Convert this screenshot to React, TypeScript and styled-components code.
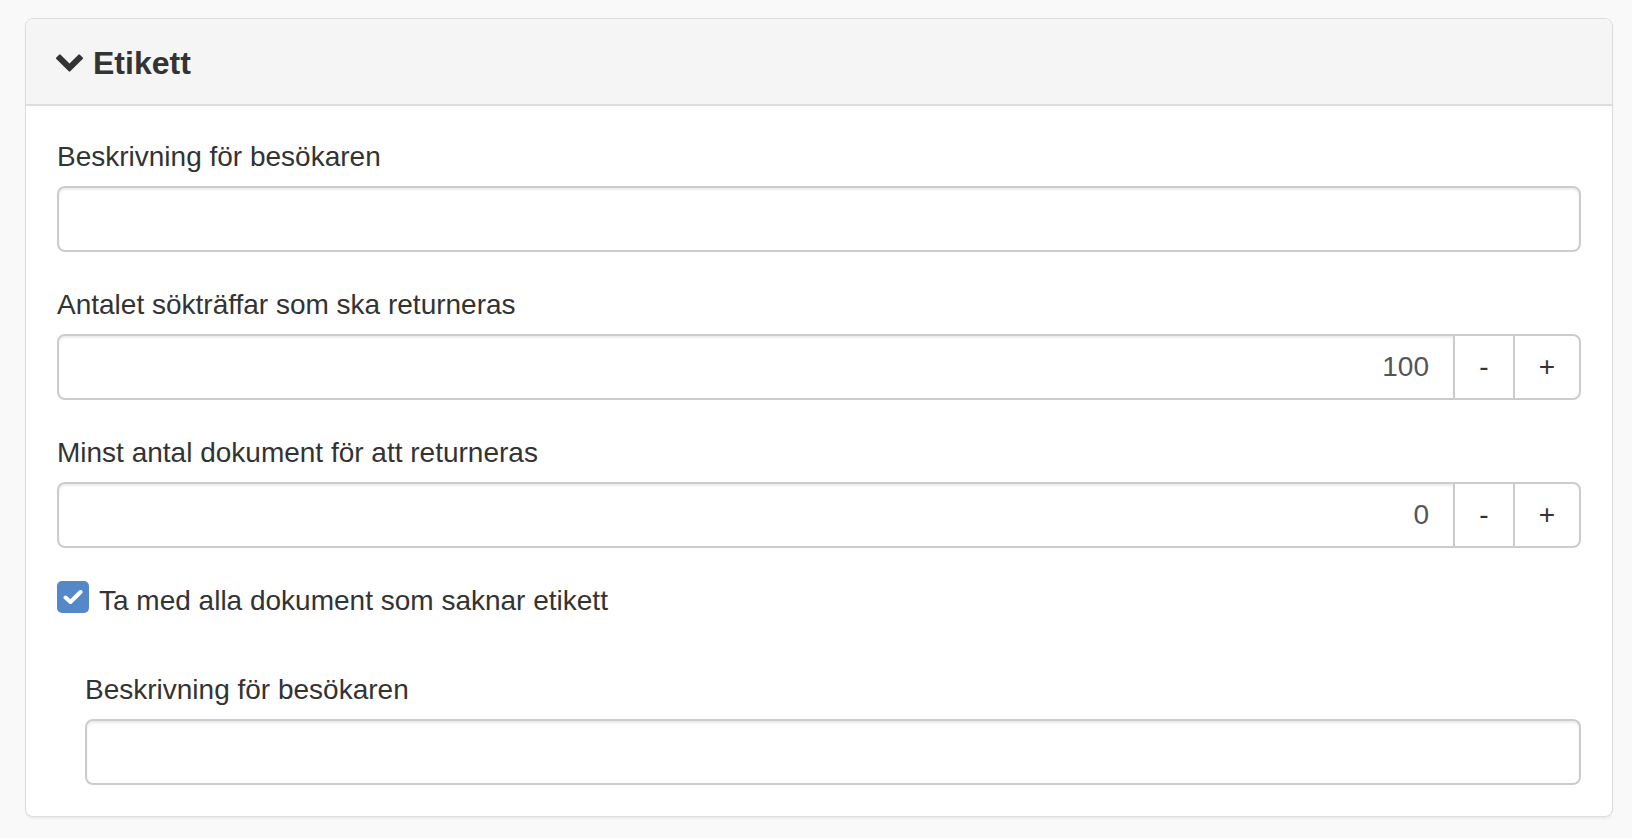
import styled, { createGlobalStyle } from 'styled-components';

const GlobalStyle = createGlobalStyle`
  html, body {
    margin: 0;
    padding: 0;
    background: #f9f9f9;
    font-family: "Liberation Sans", Arial, Helvetica, sans-serif;
    color: #333333;
  }
  * {
    box-sizing: border-box;
  }
`;

function ChevronDown() {
  return (
    <svg width="27" height="18" viewBox="90 533 1612 1035" aria-hidden="true">
      <path
        fill="#333333"
        d="M1683 808l-742 741q-19 19-45 19t-45-19l-742-741q-19-19-19-45.5t19-45.5l166-165q19-19 45-19t45 19l531 531 531-531q19-19 45-19t45 19l166 165q19 19 19 45.5t-19 45.5z"
      />
    </svg>
  );
}

function Stepper({ value }: { value: number }) {
  return (
    <InputGroup>
      <NumberInput type="text" defaultValue={String(value)} />
      <StepButton $width={62}>-</StepButton>
      <StepButton $width={68} $last>
        +
      </StepButton>
    </InputGroup>
  );
}

function App() {
  return (
    <Page>
      <GlobalStyle />
      <Panel>
        <PanelHeading>
          <PanelTitle>
            <ChevronDown />
            Etikett
          </PanelTitle>
        </PanelHeading>

        <PanelBody>
          <FormGroup>
            <Label>Beskrivning för besökaren</Label>
            <TextInput type="text" />
          </FormGroup>

          <FormGroup>
            <Label>Antalet sökträffar som ska returneras</Label>
            <Stepper value={100} />
          </FormGroup>

          <FormGroup>
            <Label>Minst antal dokument för att returneras</Label>
            <Stepper value={0} />
          </FormGroup>

          <CheckRow>
            <CheckBox>
              <svg width="20" height="16" viewBox="0 0 20 16" aria-hidden="true">
                <path d="M2.5 8.5 L7.5 13 L17.5 3" fill="none" stroke="#ffffff" strokeWidth="4" strokeLinecap="round" strokeLinejoin="round" />
              </svg>
            </CheckBox>
            <CheckLabel>Ta med alla dokument som saknar etikett</CheckLabel>
          </CheckRow>

          <FormGroup $indent $last>
            <Label>Beskrivning för besökaren</Label>
            <TextInput type="text" />
          </FormGroup>
        </PanelBody>
      </Panel>
    </Page>
  );
}

const Page = styled.div`
  padding: 18px 19px 20px 25px;
`;

const Panel = styled.div`
  background: #ffffff;
  border: 1px solid #dddddd;
  border-radius: 8px;
  box-shadow: 0 2px 2px rgba(0, 0, 0, 0.05);
  overflow: hidden;
`;

const PanelHeading = styled.div`
  background: #f5f5f5;
  border-bottom: 2px solid #dddddd;
  padding: 22px 30px 19px;
`;

const PanelTitle = styled.h3`
  margin: 0;
  display: flex;
  align-items: center;
  gap: 10px;
  font-size: 32px;
  line-height: 44px;
  font-weight: bold;
  color: #333333;
`;

const PanelBody = styled.div`
  padding: 29px 31px 31px;
`;

const FormGroup = styled.div<{ $indent?: boolean; $last?: boolean }>`
  margin-bottom: ${({ $last }) => ($last ? '0' : '31px')};
  padding-left: ${({ $indent }) => ($indent ? '28px' : '0')};
`;

const Label = styled.label`
  display: block;
  font-size: 28px;
  line-height: 40px;
  padding-top: 2px;
  margin-bottom: 9px;
  color: #333333;
`;

const TextInput = styled.input`
  display: block;
  width: 100%;
  height: 66px;
  padding: 12px 24px;
  font-family: inherit;
  font-size: 28px;
  color: #555555;
  background: #ffffff;
  border: 2px solid #cccccc;
  border-radius: 8px;
  box-shadow: inset 0 2px 2px rgba(0, 0, 0, 0.075);
  outline: none;
`;

const InputGroup = styled.div`
  display: flex;
  height: 66px;
`;

const NumberInput = styled.input`
  flex: 1;
  min-width: 0;
  height: 100%;
  padding: 12px 24px;
  font-family: inherit;
  font-size: 28px;
  color: #555555;
  text-align: right;
  background: #ffffff;
  border: 2px solid #cccccc;
  border-radius: 8px 0 0 8px;
  box-shadow: inset 0 2px 2px rgba(0, 0, 0, 0.075);
  outline: none;
`;

const StepButton = styled.button<{ $width: number; $last?: boolean }>`
  width: ${({ $width }) => $width}px;
  height: 100%;
  margin-left: -2px;
  padding: 0;
  font-family: inherit;
  font-size: 28px;
  color: #333333;
  background: #ffffff;
  border: 2px solid #cccccc;
  border-radius: ${({ $last }) => ($last ? '0 8px 8px 0' : '0')};
  cursor: pointer;
`;

const CheckRow = styled.div`
  display: flex;
  align-items: flex-start;
  gap: 10px;
  margin-bottom: 47px;
`;

const CheckBox = styled.span`
  display: flex;
  align-items: center;
  justify-content: center;
  width: 32px;
  height: 32px;
  margin-top: 2px;
  border-radius: 5px;
  background: #5588c8;
`;

const CheckLabel = styled.span`
  font-size: 28px;
  line-height: 40px;
  padding-top: 2px;
  color: #333333;
`;

export default App;
